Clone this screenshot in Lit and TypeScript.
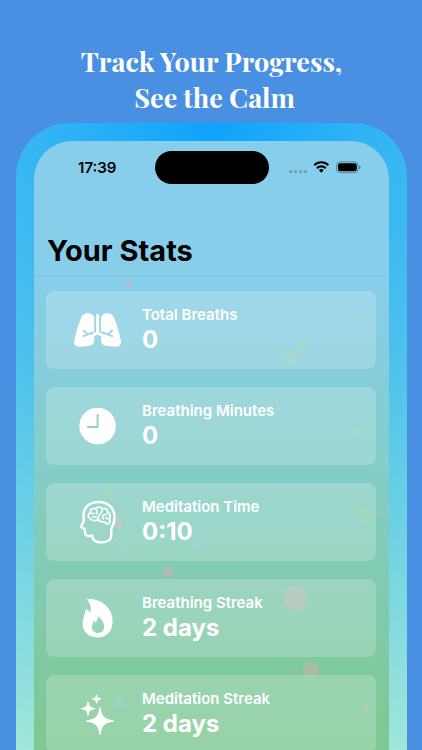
import { LitElement, html, css, svg } from "lit";
import { customElement } from "lit/decorators.js";

// Glyphs share a 50x50 grid; "hole" strokes are cut out with masks.
const icons = {
  lungs: svg`
    <mask id="lungs-cut">
      <rect width="50" height="50" fill="#fff" />
      <g fill="none" stroke="#000" stroke-width="2" stroke-linecap="round" stroke-linejoin="round">
        <path d="M19.2 27.6 L10.5 31.2 M14.8 29.4 L10.6 25.6" />
        <path d="M30.4 27.6 L39.1 31.2 M34.8 29.4 L39 25.6" />
      </g>
    </mask>
    <g fill="#fff" mask="url(#lungs-cut)">
      <path d="M15.2 8.3 C18.6 8.3 21.2 10.4 21.2 13.6 V26.6 C20.4 27.4 19 27.8 17.8 28.3 L18.6 30.3 C19.4 30.1 20.2 29.9 21.2 29.5 V35.6 C21.2 38.8 19 40.5 15.8 40.9 L6.4 41.8 C2.8 42.1 .6 39.8 1.2 36.6 C2.6 29 5.2 19.6 8.3 12.6 C9.6 9.6 12 8.3 15.2 8.3 Z" />
      <path d="M34 8.3 C30.6 8.3 28 10.4 28 13.6 V26.6 C28.8 27.4 30.2 27.8 31.4 28.3 L30.6 30.3 C29.8 30.1 29 29.9 28 29.5 V35.6 C28 38.8 30.2 40.5 33.4 40.9 L42.8 41.8 C46.4 42.1 48.6 39.8 48 36.6 C46.6 29 44 19.6 40.9 12.6 C39.6 9.6 37.2 8.3 34 8.3 Z" />
    </g>
    <path d="M24.6 10.2 V28 M24.6 28 L20 30.2 M24.6 28 L29.2 30.2" fill="none" stroke="#fff" stroke-width="3" stroke-linecap="round" />
  `,
  clock: svg`
    <circle cx="24.6" cy="25" r="18.3" fill="#fff" />
    <path d="M24.6 14 V26 H15" fill="none" stroke="#8fd2d0" stroke-width="2" stroke-linecap="round" stroke-linejoin="round" />
  `,
  mind: svg`
    <g fill="none" stroke="#fff" stroke-linecap="round" stroke-linejoin="round">
      <path stroke-width="2.5" d="M10.4 18.4 C10.6 9.8 17 4.9 25.6 4.9 C35.6 4.9 41.6 11.4 41.6 20.4 C41.6 25.6 39 29 38.2 32.4 V38.6 C38.2 43.4 33.6 45.4 28.8 45.4 C23.2 45.4 19.4 43.2 19.2 38.6 C16.6 39.3 12.9 39.5 12.2 36.6 L11.7 31.8 C10.2 31.4 8.2 30.9 8 29.6 C8.8 28 10.8 24.8 11 22.6 C10.8 21.2 10.4 19.8 10.4 18.4 Z" />
      <path stroke-width="1.8" d="M17.4 21.8 C14.4 20.4 14.6 16.6 17.4 15.6 C16.8 12.4 20 10.4 22.4 11.8 C24.2 9.4 28 9.8 29.2 11.8 C32.2 10.6 34.8 12.6 34.8 15 C37.2 16.4 37.6 19.6 36.4 21.6 C37.6 24 36.4 26.6 34.4 27 C33.2 26.8 32.4 25.2 30.8 24.8 C28.4 25.2 26.4 24.6 25.4 22.6 C23 24.2 19 24 17.4 21.8 Z" />
      <path stroke-width="1.5" d="M17.4 15.6 C18.4 17.2 20.4 17 21.6 16.2 M22.4 11.8 C24.4 13.2 24.6 15 23.6 17.4 M20 20.2 C21.2 19.2 22.8 19.6 23.4 20.6 M29.2 11.8 C29.6 14.6 28.4 16 27.2 17 C25.6 18.4 25.2 20 25.4 22.6 M34.8 15 C34.8 17 33 18 31.2 17.6 C29.6 18.8 29.4 20.4 30.2 22 M36.4 21.6 C34.8 22.2 33.4 21.4 32.8 20.6" />
    </g>
  `,
  flame: svg`
    <path fill="#fff" fill-rule="evenodd" d="M14.3 6.2 C25 5.2 39.4 12.6 39.6 28 C39.8 38 33.4 44.6 24.6 44.6 C15.6 44.6 9.6 38.6 9.6 30.6 C9.6 25.4 11.8 22.2 12.8 16.6 C14.8 16.8 16.2 18 17 19.8 C18.8 15.4 17.8 10.4 13.9 7 C13.6 6.6 13.8 6.2 14.3 6.2 Z M25 23.4 C24.8 26.4 24 27.8 22.4 29.6 C22 28.6 21.4 28 20.6 27.8 C20.2 30.4 18.9 31.6 18.9 34.2 C18.9 37.6 21.4 40 24.9 40 C28.6 40 31.1 37.4 31.1 33.8 C31.1 29.4 28.6 25.6 25 23.4 Z" />
  `,
  sparkles: svg`
    <g fill="#fff" stroke="#fff" stroke-width="1" stroke-linejoin="round">
      <path d="M27 18.6 C28.8 28 30.8 30.2 40.6 32 C30.8 33.8 28.8 36 27 45.4 C25.2 36 23.2 33.8 13.4 32 C23.2 30.2 25.2 28 27 18.6 Z" />
      <path d="M15 12.8 C15.9 17.6 17.2 18.8 22 19.6 C17.2 20.4 15.9 21.6 15 26.4 C14.1 21.6 12.8 20.4 8.4 19.6 C12.8 18.8 14.1 17.6 15 12.8 Z" />
      <path d="M23.6 5.8 C24.3 8.7 25.1 9.4 28 10 C25.1 10.6 24.3 11.3 23.6 14.2 C22.9 11.3 22.1 10.6 19.4 10 C22.1 9.4 22.9 8.7 23.6 5.8 Z" />
    </g>
  `,
};

const stats = [
  { icon: icons.lungs, label: "Total Breaths", value: "0" },
  { icon: icons.clock, label: "Breathing Minutes", value: "0" },
  { icon: icons.mind, label: "Meditation Time", value: "0:10" },
  { icon: icons.flame, label: "Breathing Streak", value: "2 days" },
  { icon: icons.sparkles, label: "Meditation Streak", value: "2 days" },
];

const bubbles: [number, number, number, string][] = [
  [95, 8, 4, "pink"],
  [334, 45, 3, "pink"],
  [257, 81, 8, "lime"],
  [268, 70, 5, "lime"],
  [238, 129, 7, "faint"],
  [323, 155, 4, "lime"],
  [74, 216, 5, "lime"],
  [332, 238, 8, "lime"],
  [84, 247, 5, "pink"],
  [161, 265, 5, "sky"],
  [89, 273, 4, "sky"],
  [134, 296, 6, "pink"],
  [261, 322, 12, "pink"],
  [214, 350, 6, "faint"],
  [277, 394, 8, "pink"],
  [85, 427, 6, "sky"],
  [333, 431, 3, "pink"],
];

@customElement("app-root")
export class AppRoot extends LitElement {
  static styles = css`
    :host {
      display: block;
      font-family: Inter, "Liberation Sans", sans-serif;
    }
    .page {
      box-sizing: border-box;
      height: 100vh;
      overflow: hidden;
      display: flex;
      flex-direction: column;
      padding: 43px 15px 0 16px;
      background: #4a90e2;
    }
    .headline {
      margin: 0 0 8px;
      font: bold 27px/36px "Playfair Display", "Liberation Serif", serif;
      text-align: center;
      color: #fff;
    }
    .frame {
      flex: 1 0 auto;
      padding: 18px 18px 0;
      border-radius: 54px 54px 0 0;
      background: radial-gradient(circle 680px at 50% 0, #0fa3ff 0, #35b6f3 26%, #4bc0ee 42%, #68cfe6 62%, #a0e6d9 96%);
    }
    .screen {
      border-radius: 38px 38px 0 0;
      overflow: hidden;
      background: #87ceeb;
    }
    .status {
      display: grid;
      grid-template-columns: 1fr 114px 1fr;
      align-items: center;
      padding-top: 10px;
    }
    .time {
      padding-left: 6px;
      text-align: center;
      font-size: 15px;
      line-height: 20px;
      font-weight: 600;
    }
    .island {
      height: 33px;
      border-radius: 17px;
      background: #000;
    }
    .signals {
      display: flex;
      justify-content: flex-end;
      padding-right: 28px;
    }
    .title {
      margin: 0;
      padding: 49px 13px 6px;
      font-size: 29px;
      line-height: 36px;
      font-weight: 700;
      color: #000;
    }
    .content {
      position: relative;
      border-top: 1px solid #80c3e0;
      padding: 15px 13px 18px 12px;
      background: linear-gradient(#87ceeb 0, #84cdc6 200px, #80c9a0 390px, #7fc890 475px);
    }
    .bubbles {
      position: absolute;
      top: 0;
      left: 0;
      width: 100%;
      height: 100%;
    }
    .pink { fill: #f5a8b4; opacity: .32; }
    .lime { fill: #a4d886; opacity: .28; }
    .faint { fill: #a4d886; opacity: .16; }
    .sky { fill: #87ceeb; opacity: .28; }
    .list {
      position: relative;
      display: grid;
      gap: 18px;
      margin: 0;
      padding: 0;
      list-style: none;
    }
    .card {
      box-sizing: border-box;
      min-height: 78px;
      display: flex;
      align-items: center;
      gap: 19px;
      padding: 0 27px;
      border-radius: 8px;
      background: rgba(255, 255, 255, .2);
      color: #fff;
    }
    .icon {
      flex: none;
      width: 50px;
      height: 50px;
    }
    .label {
      margin: 0;
      font-size: 15px;
      line-height: 20px;
      font-weight: 600;
    }
    .value {
      margin: 0;
      font-size: 24px;
      line-height: 30px;
      font-weight: 700;
    }
  `;

  render() {
    return html`
      <main class="page">
        <h1 class="headline">Track Your Progress,<br />&nbsp;See the Calm</h1>
        <div class="frame">
          <section class="screen">
            <div class="status">
              <span class="time">17:39</span>
              <span class="island"></span>
              <span class="signals">
                <svg width="74" height="16" viewBox="0 0 74 16" aria-hidden="true">
                  <g fill="#000" opacity=".22">
                    <circle cx="3.6" cy="11.6" r="1.7" />
                    <circle cx="8.5" cy="11.6" r="1.7" />
                    <circle cx="13.5" cy="11.6" r="1.7" />
                    <circle cx="18.4" cy="11.6" r="1.7" />
                  </g>
                  <g fill="none" stroke="#000" stroke-width="2.1">
                    <path d="M27.2 5.2 A10.2 10.2 0 0 1 41.4 5.2" />
                    <path d="M29.9 8.2 A6.3 6.3 0 0 1 38.7 8.2" />
                  </g>
                  <path d="M34.3 12.8 L31.9 10.2 A3.5 3.5 0 0 1 36.7 10.2 Z" />
                  <rect x="49.6" y="1.9" width="21.6" height="10.8" rx="3.4" fill="none" stroke="#000" stroke-opacity=".35" />
                  <rect x="51" y="3.3" width="18.8" height="8" rx="2.2" />
                  <path d="M72.2 5.3 Q73.6 5.9 73.6 7.3 T72.2 9.3 Z" opacity=".4" />
                </svg>
              </span>
            </div>
            <h2 class="title">Your Stats</h2>
            <div class="content">
              <svg class="bubbles" aria-hidden="true">
                ${bubbles.map(([x, y, r, tint]) => svg`<circle class=${tint} cx=${x} cy=${y} r=${r} />`)}
              </svg>
              <ul class="list">
                ${stats.map(
                  (s) => html`
                    <li class="card">
                      <svg class="icon" viewBox="0 0 50 50" aria-hidden="true">${s.icon}</svg>
                      <div>
                        <p class="label">${s.label}</p>
                        <p class="value">${s.value}</p>
                      </div>
                    </li>
                  `
                )}
              </ul>
            </div>
          </section>
        </div>
      </main>
    `;
  }
}
